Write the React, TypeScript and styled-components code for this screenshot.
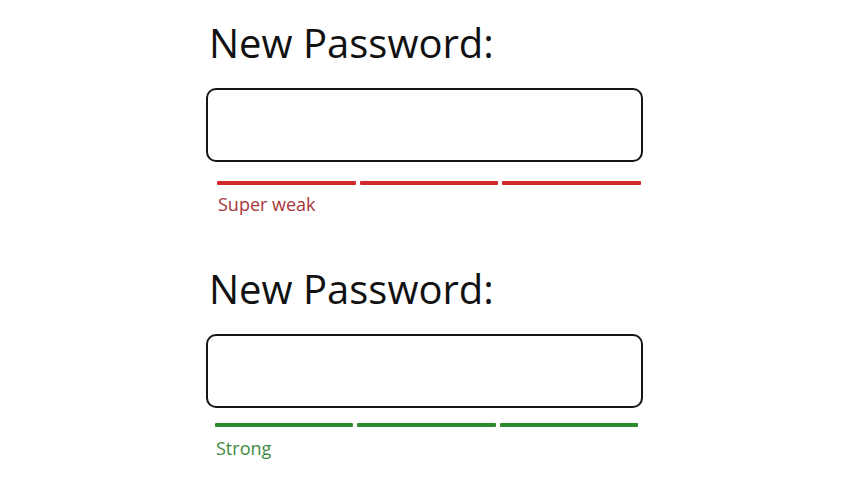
import React from "react";
import styled, { createGlobalStyle } from "styled-components";

const Global = createGlobalStyle`
  html, body { margin: 0; padding: 0; background: #fff; }
  body { width: 853px; height: 480px; overflow: hidden; font-family: "Open Sans", "Noto Sans", sans-serif; }
`;

const Page = styled.div`
  display: flex;
  flex-direction: column;
  padding: 17px 0 0 206px;
  width: 437px;
`;

const Section = styled.section<{ $top: number }>`
  display: flex;
  flex-direction: column;
  margin-top: ${(p) => p.$top}px;
`;

const Heading = styled.h2`
  margin: 0 0 0 3px;
  font-family: "Open Sans", sans-serif;
  font-weight: 400;
  font-size: 40px;
  line-height: 52px;
  color: #111;
`;

const Field = styled.div`
  margin-top: 19px;
  height: 70px;
  border: 2px solid #161616;
  border-radius: 10px;
  background: #fff;
`;

const Meter = styled.div<{ $inset: number; $gap: number; $right: number }>`
  display: grid;
  grid-template-columns: repeat(3, 1fr);
  gap: 4px;
  margin: ${(p) => p.$gap}px ${(p) => p.$right}px 0 ${(p) => p.$inset}px;
`;

const Segment = styled.div<{ $color: string }>`
  height: 4px;
  background: ${(p) => p.$color};
  border-radius: 1px;
`;

const Label = styled.div<{ $color: string; $inset: number; $gap: number }>`
  margin: ${(p) => p.$gap}px 0 0 ${(p) => p.$inset}px;
  font-family: "Open Sans", sans-serif;
  font-size: 18px;
  line-height: 24px;
  color: ${(p) => p.$color};
`;

type Props = {
  top: number;
  bar: string;
  text: string;
  label: string;
  inset: number;
  right: number;
  meterGap: number;
  labelGap: number;
};

function PasswordBlock({ top, bar, text, label, inset, right, meterGap, labelGap }: Props) {
  return (
    <Section $top={top}>
      <Heading>New Password:</Heading>
      <Field />
      <Meter $inset={inset} $gap={meterGap} $right={right}>
        <Segment $color={bar} />
        <Segment $color={bar} />
        <Segment $color={bar} />
      </Meter>
      <Label $color={text} $inset={inset + 1} $gap={labelGap}>
        {label}
      </Label>
    </Section>
  );
}

export default function App() {
  return (
    <>
      <Global />
      <Page>
        <PasswordBlock
          top={0}
          bar="#d0292c"
          text="#a8363c"
          label="Super weak"
          inset={11}
          right={2}
          meterGap={19}
          labelGap={7}
        />
        <PasswordBlock
          top={47}
          bar="#2d8a2d"
          text="#3f8a3f"
          label="Strong"
          inset={9}
          right={5}
          meterGap={15}
          labelGap={9}
        />
      </Page>
    </>
  );
}
